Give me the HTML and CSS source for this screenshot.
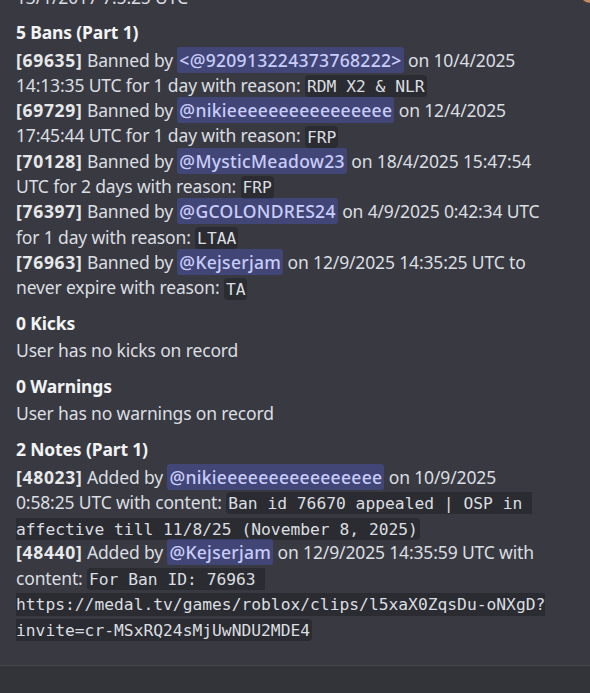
FILE: index.html
```html
<!DOCTYPE html>
<html lang="en">
<head>
<meta charset="utf-8">
<title>Moderation history</title>
<link rel="stylesheet" href="styles.css">
</head>
<body>
<div class="page">
  <div class="embed">
    <div class="corner-emoji"></div>
    <div class="stamp">13/1/2017 7:5:25 UTC</div>

    <div class="field">
      <div class="field-name">5 Bans (Part 1)</div>
      <div class="field-value">
        <b>[69635]</b> Banned by <span class="mention">&lt;@920913224373768222&gt;</span> on 10/4/2025<br>
        14:13:35 UTC for 1 day with reason: <code>RDM X2 &amp; NLR</code><br>
        <b>[69729]</b> Banned by <span class="mention">@nikieeeeeeeeeeeeeeee</span> on 12/4/2025<br>
        17:45:44 UTC for 1 day with reason: <code>FRP</code><br>
        <b>[70128]</b> Banned by <span class="mention">@MysticMeadow23</span> on 18/4/2025 15:47:54<br>
        UTC for 2 days with reason: <code>FRP</code><br>
        <b>[76397]</b> Banned by <span class="mention">@GCOLONDRES24</span> on 4/9/2025 0:42:34 UTC<br>
        for 1 day with reason: <code>LTAA</code><br>
        <b>[76963]</b> Banned by <span class="mention">@Kejserjam</span> on 12/9/2025 14:35:25 UTC to<br>
        never expire with reason: <code>TA</code>
      </div>
    </div>

    <div class="field">
      <div class="field-name">0 Kicks</div>
      <div class="field-value">User has no kicks on record</div>
    </div>

    <div class="field">
      <div class="field-name">0 Warnings</div>
      <div class="field-value">User has no warnings on record</div>
    </div>

    <div class="field">
      <div class="field-name">2 Notes (Part 1)</div>
      <div class="field-value">
        <b>[48023]</b> Added by <span class="mention">@nikieeeeeeeeeeeeeeee</span> on 10/9/2025<br>
        0:58:25 UTC with content: <code>Ban id 76670 appealed | OSP in&nbsp;<br>affective till 11/8/25 (November 8, 2025)</code><br>
        <b>[48440]</b> Added by <span class="mention">@Kejserjam</span> on 12/9/2025 14:35:59 UTC with<br>
        content: <code>For Ban ID: 76963&nbsp;<br>https://medal.tv/games/roblox/clips/l5xaX0ZqsDu-oNXgD?<br>invite=cr-MSxRQ24sMjUwNDU2MDE4</code>
      </div>
    </div>
  </div>
  <div class="footer-bar"></div>
</div>
</body>
</html>
```
FILE: styles.css
```css
html, body {
  margin: 0;
  padding: 0;
}

body {
  background: #393a41;
  color: #dbdee1;
  font-family: "Noto Sans", "Open Sans", sans-serif;
  font-size: 17.5px;
  letter-spacing: -0.15px;
  line-height: 25.3px;
  overflow: hidden;
  height: 693px;
}

.page {
  display: flex;
  flex-direction: column;
  height: 693px;
}

.embed {
  position: relative;
  flex: 1;
  padding: 0 16px;
  display: flex;
  flex-direction: column;
  gap: 10.5px;
}

.stamp {
  margin-top: -15.5px;
  color: #dbdee1;
}

.corner-emoji {
  position: absolute;
  right: -10px;
  top: -17px;
  width: 20px;
  height: 20px;
  border-radius: 50%;
  background: #c98a5c;
}

.field {
  display: flex;
  flex-direction: column;
  gap: 2px;
}

.field-name {
  font-weight: 700;
  color: #f2f3f5;
}

.field-value {
  white-space: nowrap;
}

.field-value b {
  font-weight: 700;
  letter-spacing: 0.7px;
  color: #e6e8ea;
}

.mention {
  background: rgba(88, 101, 242, 0.3);
  color: #c9cdfb;
  border-radius: 3px;
  padding: 1px 2px;
  font-weight: 500;
  letter-spacing: 0.3px;
  line-height: 1;
}

code {
  font-family: "DejaVu Sans Mono", "Liberation Mono", monospace;
  font-size: 16.3px;
  letter-spacing: 0;
  line-height: 1;
  background: #2b2c31;
  color: #dbdee1;
  border-radius: 4px;
  padding: 1.6px 2px;
}

.footer-bar {
  height: 27px;
  border-top: 1px solid #46474e;
  background: #333439;
}
```
